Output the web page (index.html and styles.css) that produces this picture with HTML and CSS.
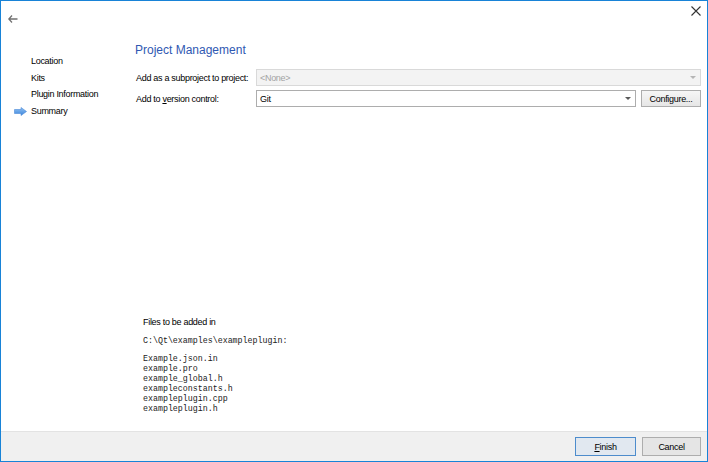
FILE: index.html
```html
<!DOCTYPE html>
<html>
<head>
<meta charset="utf-8">
<link rel="stylesheet" href="styles.css">
</head>
<body>
<div class="window">
  <div class="titlebar">
    <svg class="back" width="10" height="8" viewBox="0 0 10 8"><path d="M4 0.5 L0.8 4 L4 7.5 M1 4 H9.5" fill="none" stroke="#707070" stroke-width="1.3"/></svg>
    <svg class="close" width="10" height="10" viewBox="0 0 10 10"><path d="M0.5 0.5 L9.5 9.5 M9.5 0.5 L0.5 9.5" stroke="#333" stroke-width="1.1"/></svg>
  </div>
  <div class="main">
    <ul class="steps">
      <li class="step">Location</li>
      <li class="step">Kits</li>
      <li class="step">Plugin Information</li>
      <li class="step current"><svg class="cur" width="13" height="9" viewBox="0 0 13 9"><defs><linearGradient id="g" x1="0" y1="0" x2="0" y2="1"><stop offset="0" stop-color="#8fc0f2"/><stop offset="1" stop-color="#3d86dc"/></linearGradient></defs><path d="M0.5 2.5 H7 V0.5 L12.5 4.5 L7 8.5 V6.5 H0.5 Z" fill="url(#g)" stroke="#4a8ad8" stroke-width="0.6"/></svg>Summary</li>
    </ul>
    <div class="content">
      <h1 class="title">Project Management</h1>
      <div class="form">
        <div class="row">
          <span class="label">Add as a subproject to project:</span>
          <div class="combo disabled"><span>&lt;None&gt;</span><i class="caret"></i></div>
        </div>
        <div class="row">
          <span class="label">Add to <u>v</u>ersion control:</span>
          <div class="combo"><span>Git</span><i class="caret"></i></div>
          <button class="btn configure">Configure...</button>
        </div>
      </div>
      <div class="files">
        <p class="files-head">Files to be added in</p>
        <pre class="mono path">C:\Qt\examples\exampleplugin:</pre>
        <pre class="mono list">Example.json.in
example.pro
example_global.h
exampleconstants.h
exampleplugin.cpp
exampleplugin.h</pre>
      </div>
    </div>
  </div>
  <div class="footer">
    <button class="btn default"><u>F</u>inish</button>
    <button class="btn">Cancel</button>
  </div>
</div>
</body>
</html>
```
FILE: styles.css
```css
html, body {
  margin: 0;
  padding: 0;
  background: #fff;
}
body {
  font-family: "Liberation Sans", Arial, sans-serif;
  font-size: 9px;
  letter-spacing: -0.3px;
  color: #000;
}
.window {
  width: 708px;
  height: 462px;
  box-sizing: border-box;
  border: 1px solid #1883d7;
  display: flex;
  flex-direction: column;
  background: #fff;
}
.titlebar {
  height: 36px;
  display: flex;
  justify-content: space-between;
  align-items: flex-start;
  padding: 0 6px 0 7px;
}
.back {
  margin-top: 14px;
}
.close {
  margin-top: 5px;
}
.main {
  flex: 1;
  display: flex;
}
.steps {
  list-style: none;
  margin: 0;
  padding: 16px 0 0 0;
  width: 134px;
}
.step {
  height: 16.5px;
  line-height: 16.5px;
  padding-left: 30px;
  position: relative;
}
.cur {
  position: absolute;
  left: 13px;
  top: 4px;
}
.content {
  flex: 1;
  display: flex;
  flex-direction: column;
  padding: 5px 6px 0 0;
}
.title {
  margin: 0;
  font-weight: normal;
  font-size: 12px;
  letter-spacing: 0;
  line-height: 16px;
  color: #2f58b2;
}
.form {
  margin-top: 11px;
  display: flex;
  flex-direction: column;
  gap: 4px;
}
.row {
  display: flex;
  align-items: center;
  height: 17px;
  gap: 5px;
}
.label {
  width: 115px;
  padding-left: 1px;
}
.combo {
  flex: 1;
  height: 17px;
  box-sizing: border-box;
  border: 1px solid #adadad;
  background: #fff;
  display: flex;
  align-items: center;
  justify-content: space-between;
  padding: 0 4px 0 3px;
}
.combo.disabled {
  background: #f3f3f3;
  border-color: #d9d9d9;
  color: #a3a3a3;
}
.caret {
  width: 0;
  height: 0;
  border-left: 3px solid transparent;
  border-right: 3px solid transparent;
  border-top: 3px solid #5a5a5a;
}
.combo.disabled .caret {
  border-top-color: #b5b5b5;
}
.btn {
  font-family: "Liberation Sans", Arial, sans-serif;
  font-size: 9px;
  letter-spacing: -0.3px;
  color: #000;
  box-sizing: border-box;
  border: 1px solid #adadad;
  background: linear-gradient(#f6f6f6, #e6e6e6);
  padding: 0;
}
.configure {
  width: 60px;
  height: 17px;
}
.files {
  margin-top: auto;
  padding: 0 0 17px 8px;
}
.files-head {
  margin: 0;
  line-height: 12px;
}
.mono {
  font-family: "Liberation Mono", "Courier New", monospace;
  font-size: 8.3px;
  letter-spacing: 0;
  line-height: 10px;
  margin: 0;
  color: #222;
}
.path {
  margin-top: 8px;
  margin-bottom: 8px;
}
.footer {
  height: 30px;
  box-sizing: border-box;
  background: #f0f0f0;
  border-top: 1px solid #e3e3e3;
  display: flex;
  justify-content: flex-end;
  align-items: center;
  gap: 6px;
  padding: 0 6px 0 0;
}
.footer .btn {
  width: 59px;
  height: 19px;
  background: #e5e5e5;
}
.footer .btn.default {
  width: 61px;
  border-color: #4d8ccc;
  background: #e1e8f0;
}
```
